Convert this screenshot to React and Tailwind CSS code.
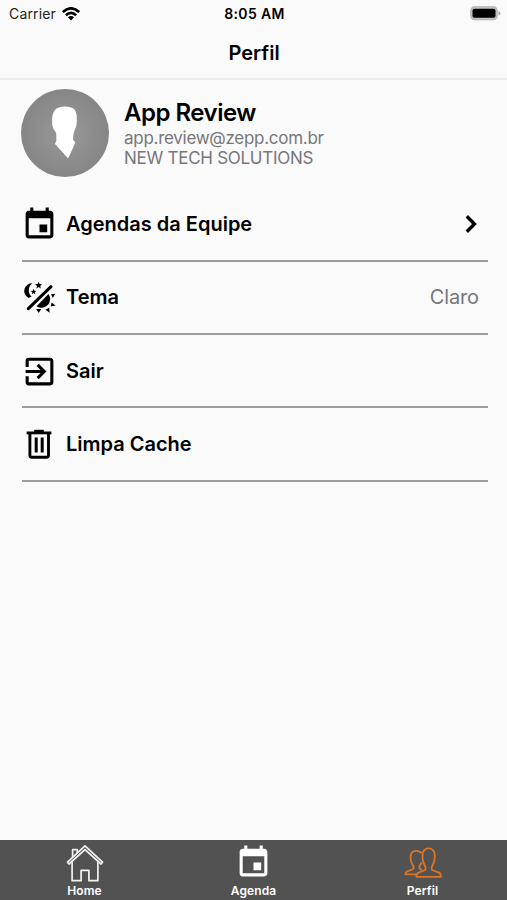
import { MdEvent, MdExitToApp } from "react-icons/md";

const ThemeIcon = () => (
  <svg viewBox="0 0 37 37" className="w-[37px] h-[37px]" fill="#000">
    <path d="M11.5 4.2A7.8 7.8 0 0 0 7.6 19L10.6 17.6A8.6 8.6 0 0 1 11.5 4.2Z" />
    <path d="M17.6 2.8l1 2.3 2.5.2-1.9 1.7.6 2.5-2.2-1.4-2.2 1.4.6-2.5-1.9-1.7 2.5-.2z" />
    <path d="M12.6 10l.8 1.8 2 .1-1.5 1.3.4 2-1.7-1.1-1.7 1.1.4-2-1.5-1.3 2-.1z" />
    <path d="M30 7.7L7.3 29.6" stroke="#000" strokeWidth="3" strokeLinecap="round" />
    <path d="M27.4 15A8.6 8.6 0 0 1 15.6 27.2Z" />
    <path d="M30 15.2l4.2-.4-2.4 4.2zM30.6 23.4l4 3.2-4.8.9zM24.4 30.8l3.8-2 .4 5zM15.2 30h5l-2.5 4.1z" />
  </svg>
);

const TrashIcon = () => (
  <svg viewBox="0 0 37 37" className="w-[37px] h-[37px]" fill="none" stroke="#000">
    <path d="M5.6 6.9H30.4" strokeWidth="2.8" />
    <path d="M13.2 5.2H22.8" strokeWidth="2.8" />
    <path d="M8.9 7.5V29.3Q8.9 31.3 10.9 31.3H25.5Q27.5 31.3 27.5 29.3V7.5" strokeWidth="2.9" />
    <path d="M15.2 11.5V26.5M21.2 11.5V26.5" strokeWidth="3" />
  </svg>
);

const WifiIcon = () => (
  <svg viewBox="0 0 18 14" className="w-[18px] h-[14px]" fill="none" stroke="#000" strokeWidth="2.7">
    <path d="M.9 5.1Q9-2.4 17.1 5.1M3.9 8.2Q9 3.5 14.1 8.2" />
    <path d="M5.9 10.3Q9 7.9 12.1 10.3L9 13.6Z" fill="#000" stroke="none" />
  </svg>
);

const BatteryIcon = () => (
  <svg viewBox="0 0 32 16" className="w-8 h-4">
    <rect x=".8" y=".8" width="26.4" height="12.8" rx="3.8" fill="#c4c4c4" stroke="#b5b5b5" strokeWidth="1.2" />
    <rect x="2.5" y="2.7" width="23" height="9" rx="1.8" fill="#000" />
    <path d="M28.5 5Q30.5 5.5 30.5 7.3T28.5 9.6Z" fill="#aaa" />
  </svg>
);

const Avatar = () => (
  <svg viewBox="0 0 88 88" className="w-[88px] h-[88px] shrink-0">
    <defs>
      <radialGradient id="avatarFill">
        <stop offset="0" stopColor="#999" />
        <stop offset="1" stopColor="#868686" />
      </radialGradient>
      <filter id="soft">
        <feGaussianBlur stdDeviation=".7" />
      </filter>
    </defs>
    <circle cx="44" cy="44" r="44" fill="url(#avatarFill)" />
    <path
      d="M35 20C38 16.5 50 16.5 53 20C56 23.5 56 28 55.8 33C55.7 38 53.4 41 52.4 45L52 50.5L54.3 53.5L51.5 60L47 69.5L40.5 62L34 55L35.4 51.5L35.2 44C32.5 40 31 38 31.2 33C31 28 31.5 23.5 35 20Z"
      fill="#fff"
      filter="url(#soft)"
    />
  </svg>
);

const HomeIcon = () => (
  <svg viewBox="0 0 38 38" className="w-[38px] h-[38px]" fill="none" stroke="#f2f2f2" strokeWidth="1.7" strokeLinejoin="round">
    <path d="M1.5 18.2L19 1.8L36.5 18.2L35 20L19 5.6L3 20Z" />
    <path d="M6.1 17.5V36.7H15.1V26.4H22.9V36.7H31.9V17.5M6.6 13.2V5.6H11.3V9" />
  </svg>
);

const PeopleIcon = () => (
  <svg viewBox="0 0 38 32" className="w-[38px] h-8" fill="none" stroke="#dc7424" strokeWidth="1.8" strokeLinejoin="round">
    <path d="M17.6 6.2Q16 3.8 12.3 3.8C8.6 3.8 6.8 6 6.6 9.5C6.4 13 7.4 16.7 9.6 19.4L9.4 22L3.3 24.4Q1.4 25.3 1.2 27.4H12.4M17.4 15.5L15.5 19.4L15.8 22L18 23" />
    <path d="M21.6 20.2C19.2 16.3 18.2 14 18.5 8.2C18.8 3.5 20.8 1.4 24.5 1.4S30.5 3.5 30.8 8.2C31.1 14 30 16.3 27.6 20.2L28 23L35 25.6Q37 26.6 37 29.8H12.4Q12.4 26.6 14.4 25.6L21.4 23Z" />
  </svg>
);

const menu = [
  {
    label: "Agendas da Equipe",
    icon: <MdEvent size={37} />,
    right: (
      <svg viewBox="0 0 12 20" className="w-3 h-5 mr-[3px]" fill="none" stroke="#000" strokeWidth="3.4">
        <path d="M1.8 2.2L9.4 10L1.8 17.8" />
      </svg>
    ),
  },
  {
    label: "Tema",
    icon: <ThemeIcon />,
    right: <span className="mr-px text-[20px] tracking-[-0.1px] text-[#77777a]">Claro</span>,
  },
  { label: "Sair", icon: <MdExitToApp size={37} /> },
  { label: "Limpa Cache", icon: <TrashIcon /> },
];

const tabs = [
  { label: "Home", icon: <HomeIcon /> },
  { label: "Agenda", icon: <MdEvent size={37} /> },
  { label: "Perfil", icon: <PeopleIcon /> },
];

const App = () => {
  return (
    <div className="w-full h-[900px] flex flex-col bg-[#fafafa] text-black font-['Inter',sans-serif] overflow-hidden">
      <header className="h-[80px] shrink-0 border-b-2 border-[#ececec]">
        <div className="h-[27px] grid grid-cols-3 items-center pl-[7px] pr-[5px] text-[14px]">
          <div className="flex items-center gap-[6px] pl-[2px] text-[#222]">
            <span className="tracking-[0.15px]">Carrier</span>
            <WifiIcon />
          </div>
          <p className="text-center font-semibold tracking-[0.35px]">8:05 AM</p>
          <div className="flex justify-end">
            <BatteryIcon />
          </div>
        </div>
        <h1 className="h-[51px] flex items-center justify-center pl-px text-[20px] font-semibold">
          Perfil
        </h1>
      </header>
      <main className="flex-1">
        <section className="flex pt-[9px] pl-[20.5px]">
          <Avatar />
          <div className="ml-[15.5px] pt-[9px] whitespace-nowrap">
            <h2 className="text-[24px] leading-[30px] font-semibold tracking-[-0.5px]">
              App Review
            </h2>
            <p className="text-[17px] leading-[20px] tracking-[-0.28px] text-[#77777a]">
              app.review@zepp.com.br
            </p>
            <p className="text-[17px] leading-[21px] tracking-[-0.27px] text-[#77777a]">
              NEW TECH SOLUTIONS
            </p>
          </div>
        </section>
        <ul className="mt-[11.6px] ml-[22px] mr-[19.5px]">
          {menu.map((item) => (
            <li
              key={item.label}
              className="h-[73.25px] flex items-center border-b-2 border-[#9c9c9c] pr-[7.5px]"
            >
              <span className="-ml-[0.8px] mr-[7.8px] pt-px">{item.icon}</span>
              <span className="flex-1 text-[20px] font-semibold">
                {item.label}
              </span>
              {item.right}
            </li>
          ))}
        </ul>
      </main>
      <nav className="h-[60px] shrink-0 grid grid-cols-3 bg-[#525252] text-white">
        {tabs.map((tab) => (
          <div key={tab.label} className="flex flex-col items-center pt-[3px]">
            <span className="h-[40px] pb-px flex items-center">{tab.icon}</span>
            <span className="text-[12px] leading-[15px] font-semibold tracking-[0.1px]">{tab.label}</span>
          </div>
        ))}
      </nav>
    </div>
  );
};
export default App;
